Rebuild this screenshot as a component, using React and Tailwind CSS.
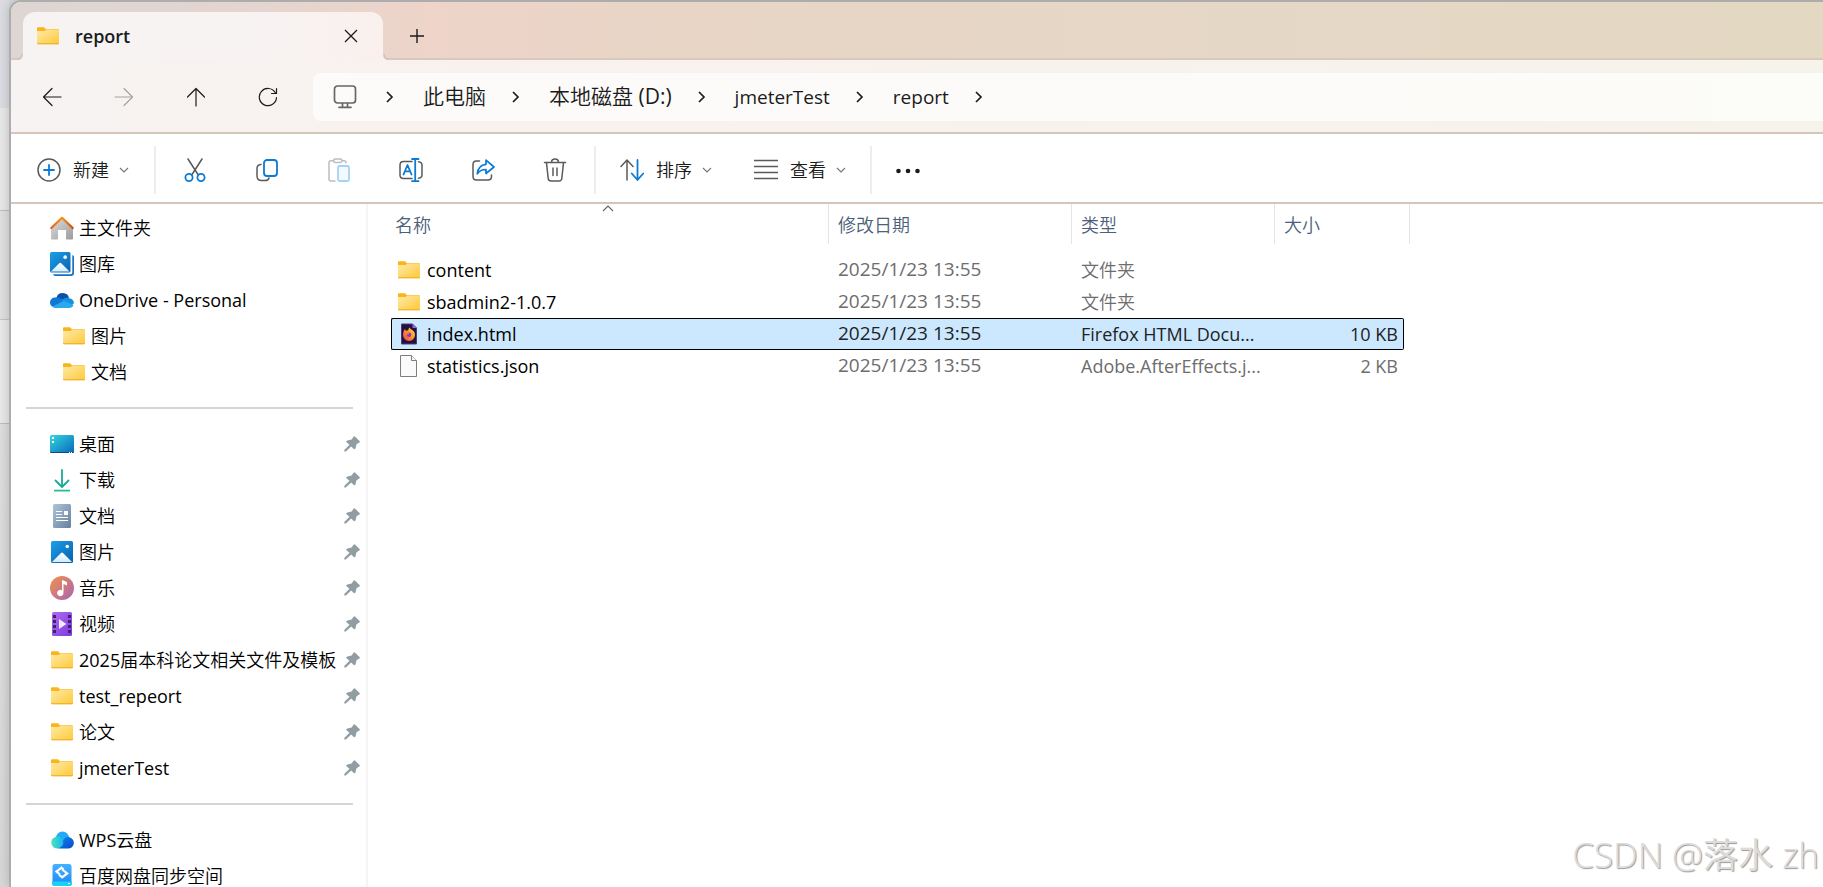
const crumbs = [
  { name: "此电脑", style: "text-[21px]" },
  { name: "本地磁盘 (D:)", style: "text-[21px]" },
  { name: "jmeterTest", style: "text-[19px]" },
  { name: "report", style: "text-[19px]" },
];

const homeItems = [
  { name: "主文件夹", icon: HomeIcon },
  { name: "图库", icon: GalleryIcon },
  { name: "OneDrive - Personal", icon: OneDriveIcon },
  { name: "图片", icon: FolderIcon, nested: true },
  { name: "文档", icon: FolderIcon, nested: true },
];

const pinnedItems = [
  { name: "桌面", icon: DesktopIcon },
  { name: "下载", icon: DownloadIcon },
  { name: "文档", icon: DocumentIcon },
  { name: "图片", icon: PictureIcon },
  { name: "音乐", icon: MusicIcon },
  { name: "视频", icon: VideoIcon },
  { name: "2025届本科论文相关文件及模板", icon: FolderIcon },
  { name: "test_repeort", icon: FolderIcon },
  { name: "论文", icon: FolderIcon },
  { name: "jmeterTest", icon: FolderIcon },
];

const cloudItems = [
  { name: "WPS云盘", icon: WpsIcon },
  { name: "百度网盘同步空间", icon: BaiduIcon },
];

const files = [
  { name: "content", date: "2025/1/23 13:55", type: "文件夹", size: "", icon: FolderIcon },
  { name: "sbadmin2-1.0.7", date: "2025/1/23 13:55", type: "文件夹", size: "", icon: FolderIcon },
  { name: "index.html", date: "2025/1/23 13:55", type: "Firefox HTML Docu...", size: "10 KB", icon: FirefoxFileIcon, selected: true },
  { name: "statistics.json", date: "2025/1/23 13:55", type: "Adobe.AfterEffects.j...", size: "2 KB", icon: FileIcon },
];

/* ---------- sidebar and file icons ---------- */

function FolderIcon() {
  return (
    <svg width="24" height="24" viewBox="0 0 24 24">
      <defs>
        <linearGradient id="folder" x1="0" y1="0" x2="1" y2="1">
          <stop offset="0" stopColor="#ffe9a6" />
          <stop offset="1" stopColor="#ffca3a" />
        </linearGradient>
      </defs>
      <path fill="#f9b51b" d="M1 4.2q0-1 1-1h6l2 2h12q1 0 1 1V19H1z" />
      <path fill="url(#folder)" d="M1 7h7.600l1.600-1.200H23V19.500q0 .7-1 .7H2q-1 0-1-.7z" />
      <path fill="#eeaa1e" d="M1 19.200h22v.3q0 .8-1 .8H2q-1 0-1-.8z" />
    </svg>
  );
}

function HomeIcon() {
  return (
    <svg width="24" height="24" viewBox="0 0 24 24">
      <defs>
        <linearGradient id="house" x1="0" y1="0" x2="1" y2="1">
          <stop offset="0" stopColor="#dedede" />
          <stop offset="1" stopColor="#9c9c9c" />
        </linearGradient>
        <linearGradient id="roof" x1="0" y1="0" x2="1" y2="0">
          <stop offset="0" stopColor="#ea5f1b" />
          <stop offset=".5" stopColor="#f6920e" />
          <stop offset="1" stopColor="#cf4a17" />
        </linearGradient>
      </defs>
      <path fill="url(#house)" d="M1 12 12 2l11 10v10.500q0 1-1 1h-5q-1 0-1-1V14H8v8.500q0 1-1 1H2q-1 0-1-1z" />
      <path fill="none" stroke="url(#roof)" strokeWidth="2.200" strokeLinecap="round" strokeLinejoin="round" d="M1.300 12 12 1.800 22.700 12" />
    </svg>
  );
}

function PhotoArt({ id, size }) {
  return (
    <>
      <defs>
        <linearGradient id={id} x1="0" y1="0" x2="1" y2="1">
          <stop offset="0" stopColor="#1c9fe8" />
          <stop offset="1" stopColor="#0860b0" />
        </linearGradient>
        <linearGradient id={id + "-hill"} x1="0" y1="0" x2="0" y2="1">
          <stop offset="0" stopColor="#ffffff" />
          <stop offset="1" stopColor="#d5ebfb" />
        </linearGradient>
      </defs>
      <rect width={size} height={size} rx="1.500" fill={`url(#${id})`} />
      <path fill={`url(#${id}-hill)`} d={`M1 ${size - 1} ${size / 2 - 1} ${size / 2 + 1}q1-1 2 0L${size - 1} ${size - 1}z`} />
      <circle cx={size * 0.74} cy={size * 0.25} r="1.800" fill="#fff" />
    </>
  );
}

function GalleryIcon() {
  return (
    <svg width="24" height="24" viewBox="0 0 24 24">
      <path fill="#1a6fc0" d="M22.300 3q1.700.5 1.700 2v16q0 3-3 3H5q-1.500 0-2-1.700h17.500q1.800 0 1.800-1.800z" />
      <PhotoArt id="gallery" size={20.5} />
    </svg>
  );
}

function PictureIcon() {
  return (
    <svg width="24" height="24" viewBox="-1 -1 24 24">
      <PhotoArt id="picture" size={22} />
    </svg>
  );
}

function OneDriveIcon() {
  return (
    <svg width="24" height="24" viewBox="0 0 24 24">
      <path fill="#0b4fa8" d="M6.500 9.500A6.500 6.500 0 0 1 19 10l-5 5z" />
      <path fill="#0f78d4" d="M5 19.500a5 5 0 0 1 0-10q3-1 5.500.7l8 5-12 5z" />
      <path fill="#1490df" d="m11 12.300 3.500-2Q18 8.500 20 10.500 23.500 11 24 15l-4 4z" />
      <path fill="#2aa9ee" d="M2.500 18.500 14 12.800l9.500 4.200q-1 3-4.500 3H5q-1.500-.2-2.500-1.500z" />
    </svg>
  );
}

function DesktopIcon() {
  return (
    <svg width="24" height="24" viewBox="0 0 24 24">
      <defs>
        <linearGradient id="desktop" x1="0" y1="0" x2="1" y2="1">
          <stop offset="0" stopColor="#31d9df" />
          <stop offset="1" stopColor="#0a67bb" />
        </linearGradient>
      </defs>
      <rect y="3" width="24" height="18" rx="1.500" fill="url(#desktop)" />
      <path fill="#0b4a80" d="M0 20h24q-.3 1-1.500 1h-21Q.3 21 0 20z" />
      <path fill="#fff" d="M2 5h2v2H2zM2 9h2v2H2zM19 20h1v1h-1zM21 20h1v1h-1z" />
    </svg>
  );
}

function DownloadIcon() {
  return (
    <svg width="24" height="24" viewBox="0 0 24 24" fill="none" stroke="#18ab93" strokeWidth="1.800" strokeLinecap="round" strokeLinejoin="round">
      <path d="M12 2v17M5.500 12.500 12 19l6.500-6.500" />
      <path stroke="#28bf8c" strokeLinecap="butt" d="M4 22.600h16" />
    </svg>
  );
}

function DocumentIcon() {
  return (
    <svg width="24" height="24" viewBox="0 0 24 24">
      <defs>
        <linearGradient id="doc" x1="0" y1="0" x2="1" y2="1">
          <stop offset="0" stopColor="#b0c4d8" />
          <stop offset="1" stopColor="#64809f" />
        </linearGradient>
      </defs>
      <rect x="3" width="18" height="24" rx="1.500" fill="url(#doc)" />
      <path stroke="#fff" strokeWidth="1.200" d="M6 7.500h6M6 10.500h6M6 13.500h12M6 16.500h12" />
      <rect x="14" y="7" width="4" height="4" fill="#fff" />
    </svg>
  );
}

function MusicIcon() {
  return (
    <svg width="24" height="24" viewBox="0 0 24 24">
      <defs>
        <linearGradient id="music" x1="0" y1="0" x2="1" y2="1">
          <stop offset="0" stopColor="#f59048" />
          <stop offset="1" stopColor="#a664b5" />
        </linearGradient>
      </defs>
      <circle cx="12" cy="12" r="12" fill="url(#music)" />
      <path fill="#fff" d="M12 4q3 .8 5 2.200v3.400L13.500 8v9A3.200 3.200 0 1 1 12 14.300z" />
    </svg>
  );
}

function VideoIcon() {
  return (
    <svg width="24" height="24" viewBox="0 0 24 24">
      <defs>
        <linearGradient id="video" x1="0" y1="0" x2="1" y2="1">
          <stop offset="0" stopColor="#b06bf0" />
          <stop offset="1" stopColor="#7c3ae0" />
        </linearGradient>
      </defs>
      <rect x="2" width="20" height="24" rx="1.500" fill="url(#video)" />
      <path fill="#3d2266" d="M3 3h3v3H3zM3 8h3v3H3zM3 13h3v3H3zM3 18h3v3H3zM18 3h3v3h-3zM18 8h3v3h-3zM18 13h3v3h-3zM18 18h3v3h-3z" />
      <path fill="#f3eafd" d="m9 7 7.500 5L9 17z" />
    </svg>
  );
}

function WpsIcon() {
  return (
    <svg width="24" height="24" viewBox="0 0 24 24">
      <defs>
        <linearGradient id="wps-left" x1="0" y1="0" x2="1" y2="0">
          <stop offset="0" stopColor="#4fe3b8" />
          <stop offset="1" stopColor="#17b7f2" />
        </linearGradient>
        <linearGradient id="wps-right" x1="0" y1="0" x2="1" y2="1">
          <stop offset="0" stopColor="#1287f5" />
          <stop offset="1" stopColor="#0648c4" />
        </linearGradient>
      </defs>
      <circle cx="12.500" cy="10" r="6.500" fill="#22aaf5" />
      <path fill="url(#wps-right)" d="M8 20.500 15 10q2-1.700 4.500-.7A5.700 5.700 0 0 1 17.500 20.500z" />
      <path fill="url(#wps-left)" d="M7 20.500A5.900 5.900 0 1 1 12.500 12q2 4-1 6.500-2 2-4.500 2z" />
    </svg>
  );
}

function BaiduIcon() {
  return (
    <svg width="24" height="24" viewBox="0 0 24 24">
      <defs>
        <linearGradient id="baidu" x1="0" y1="0" x2="0" y2="1">
          <stop offset="0" stopColor="#45b2ff" />
          <stop offset="1" stopColor="#1e8bf8" />
        </linearGradient>
      </defs>
      <rect x="2.500" y="0" width="19" height="20" rx="2.500" fill="url(#baidu)" />
      <path fill="#19d0f5" d="M2 17.500h20V20q0 2-2 2H4q-2 0-2-2z" />
      <path fill="#fff" d="M18 19h2v1h-2z" />
      <path fill="none" stroke="#fff" strokeWidth="2.200" d="M9.800 10.300 6.500 7.500l5-3.800 2 1.800M12.200 5.500l5 4-5 3.800-3-2.500" />
    </svg>
  );
}

function FirefoxFileIcon() {
  return (
    <svg width="24" height="24" viewBox="0 0 24 24">
      <defs>
        <linearGradient id="fox" x1="1" y1="0" x2="0" y2="1">
          <stop offset="0" stopColor="#ffe03a" />
          <stop offset=".5" stopColor="#ff9226" />
          <stop offset="1" stopColor="#f5305c" />
        </linearGradient>
      </defs>
      <path fill="#23103f" stroke="#4b3a86" d="M4.500 2h11l4 4v16h-15z" />
      <path fill="#8a6bd8" d="M15.500 1.500 20 6h-4.500z" />
      <path fill="url(#fox)" d="M6 12q0-3 2-5l1 2q1-.8 2.300-.8 0-1.700 1.200-2.700 1 1.600 2.700 2.500 2.800 1.500 2.800 5a6 6 0 0 1-12 0z" />
      <circle cx="12" cy="12.800" r="2.300" fill="#7b3bd1" />
      <path fill="#ff7a2c" d="M8.500 11q2-1 3.700.5-.2 1-1.700 1.200z" />
    </svg>
  );
}

function FileIcon() {
  return (
    <svg width="24" height="24" viewBox="0 0 24 24" fill="#fafafa" stroke="#7d7d7d">
      <path d="M3.500 1.500h11l5 5v16h-16z" />
      <path d="M14.500 1.500v5h5" />
    </svg>
  );
}

function PinIcon() {
  return (
    <svg className="shrink-0" width="16" height="16" viewBox="0 0 16 16">
      <path fill="#929ca3" d="M9.500.8q.8-.9 1.700 0l4.300 4.200q.8.900-.2 1.500L12.500 8.300l-1 3.900q-.4 1.400-1.500 1.100L7.200 10.600 1.800 15.500H.3v-1.400L5.500 8.800 2.300 5.900q-.3-1.200 1.100-1.500l4.200-.9z" />
    </svg>
  );
}

/* ---------- toolbar icons ---------- */

function Chevron({ className = "" }) {
  return (
    <svg className={className} width="10" height="14" viewBox="0 0 10 14" fill="none" stroke="#1b1b1b" strokeWidth="1.700">
      <path d="m2 2 5 5-5 5" />
    </svg>
  );
}

function SmallChevron() {
  return (
    <svg width="10" height="10" viewBox="0 0 10 10" fill="none" stroke="#777" strokeWidth="1.100">
      <path d="m1 3 4 4 4-4" />
    </svg>
  );
}

function Stroke({ children }) {
  return (
    <svg width="24" height="24" viewBox="0 0 24 24" fill="none" stroke="#5a5a5a" strokeWidth="1.500" strokeLinecap="round" strokeLinejoin="round">
      {children}
    </svg>
  );
}

const commands = [
  {
    label: "剪切",
    art: (
      <>
        <path d="M5 1 15.300 17M19 1 8.700 17" />
        <g stroke="#0a7bd6" strokeWidth="1.800">
          <circle cx="6" cy="19.500" r="3.600" />
          <circle cx="18" cy="19.500" r="3.600" />
        </g>
      </>
    ),
  },
  {
    label: "复制",
    art: (
      <>
        <path d="M6 6.500q-4 .2-4 4V18q0 4.500 4.500 4.500H10q3.500 0 4-2.500" />
        <rect x="9" y="2" width="13" height="16" rx="3" stroke="#0a7bd6" strokeWidth="1.800" />
      </>
    ),
  },
  {
    label: "粘贴",
    art: (
      <>
        <g stroke="#bdbdbd">
          <path d="M6.500 2.800H4q-2 0-2 2V21q0 2 2 2h4M15 2.800h2q2 0 2 2" />
          <rect x="6.500" y="1" width="8.500" height="3.500" rx="1.700" />
        </g>
        <rect x="11" y="8" width="11" height="15" rx="1.500" fill="#f3f9fe" stroke="#a5d3f5" strokeWidth="1.800" />
      </>
    ),
  },
  {
    label: "重命名",
    art: (
      <>
        <path d="M13 3.500H4.500Q1 3.500 1 7v10q0 3.500 3.500 3.500H13M19.500 3.700q3.500.3 3.500 3.500v9.600q0 3.200-3.500 3.500" />
        <g stroke="#0a7bd6" strokeWidth="1.800">
          <path d="M13 1h6.500M13 23.200h6.500M16.200 1v22.200" />
          <path d="m4.500 16.500 4-9.500 4 9.500M6 13.300h5" />
        </g>
      </>
    ),
  },
  {
    label: "共享",
    art: (
      <>
        <path d="M8.500 3H5.500Q2 3 2 6.500v12Q2 22 5.500 22h11.500q3.500 0 3.500-3.500V17" />
        <path stroke="#0a7bd6" strokeWidth="1.700" d="M15 2.200 23 9l-8 6.500v-4q-6 0-8.700 4.300Q7.200 7 15 6.300z" />
      </>
    ),
  },
  {
    label: "删除",
    art: (
      <>
        <path d="M1.500 4.500h21M8.500 4.300q0-3.300 3.500-3.300t3.500 3.300M3.500 4.800 5.200 20.500q.3 2.500 2.800 2.500h8q2.500 0 2.800-2.500L20.500 4.800M10 10v7.500M14 10v7.500" />
      </>
    ),
  },
];

function TabCorner({ className }) {
  return (
    <svg className={className} width="6" height="6" viewBox="0 0 6 6">
      <path fill="#f7f2f1" d="M6 0v6H0q6 0 6-6z" />
      <path fill="none" stroke="#d3c2bc" strokeWidth="1.500" d="M0 5q5 0 5-5" />
    </svg>
  );
}

function TitleBar() {
  return (
    <div className="flex h-[58px] items-end border-b-2 border-[#d9c9bd] bg-[linear-gradient(90deg,#ded6d3_0%,#e3d5d0_13%,#eed4c9_23%,#e8d5c6_36%,#e5d8c6_75%,#e3d8c2_100%)] pl-3">
      <div className="relative -mb-0.5 flex h-12 w-[360px] items-center rounded-t-xl bg-linear-to-r from-[#f6f3f2] from-60% to-[#faf0ee] pr-6 pl-[13px]">
        <TabCorner className="absolute bottom-0 -left-[6px]" />
        <TabCorner className="absolute -right-[6px] bottom-0 -scale-x-100" />
        <FolderIcon />
        <span className="ml-[15px] flex-1 text-lg font-semibold text-[#1b1b1b]">report</span>
        <button type="button" aria-label="关闭标签页">
          <svg width="16" height="16" viewBox="0 0 16 16" stroke="#1b1b1b" strokeWidth="1.300">
            <path d="m2 2 12 12M14 2 2 14" />
          </svg>
        </button>
      </div>
      <button type="button" aria-label="新建标签页" className="mb-3 ml-6">
        <svg width="20" height="20" viewBox="0 0 20 20" stroke="#1b1b1b" strokeWidth="1.400">
          <path d="M10 3v14M3 10h14" />
        </svg>
      </button>
    </div>
  );
}

function NavButton({ label, muted, children }) {
  return (
    <button type="button" aria-label={label} className="flex w-[72px] justify-center">
      <svg width="20" height="20" viewBox="0 0 20 20" fill="none" stroke={muted ? "#a5a2a1" : "#1b1b1b"} strokeWidth="1.200" strokeLinecap="round" strokeLinejoin="round">
        {children}
      </svg>
    </button>
  );
}

function AddressBar() {
  return (
    <div className="flex h-[74px] items-center border-b-2 border-[#d6c6b9] bg-linear-to-r from-[#f6f3f2] via-[#f9f1ee] via-25% to-[#f6f3eb] pt-0.5 pl-[5px]">
      <NavButton label="后退">
        <path d="M19 10H1.500M10 1.500 1.500 10l8.500 8.500" />
      </NavButton>
      <NavButton label="前进" muted>
        <path d="M1 10h17.500M10 1.500l8.500 8.500-8.500 8.500" />
      </NavButton>
      <NavButton label="上移">
        <path d="M10 19V1.500M1.500 10 10 1.500l8.500 8.500" />
      </NavButton>
      <NavButton label="刷新">
        <path d="M18.500 10.500A8.600 8.600 0 1 1 17.200 5.500M18.500 1.500v5h-5" />
      </NavButton>
      <nav className="ml-[9px] flex h-12 flex-1 items-center rounded-l-lg bg-white/70 pl-5 text-[#1b1b1b]">
        <svg width="24" height="24" viewBox="0 0 24 24" fill="none" stroke="#666" strokeWidth="1.700" strokeLinecap="round">
          <rect x="1.500" y="1" width="21" height="17" rx="3" />
          <path d="M9.500 18.500v3M14.500 18.500v3M6 22.300h12" />
        </svg>
        <Chevron className="ml-7" />
        {crumbs.map((crumb) => (
          <div key={crumb.name} className="flex items-center">
            <a href="#" className={`ml-7 whitespace-nowrap ${crumb.style}`}>{crumb.name}</a>
            <Chevron className="ml-[25px]" />
          </div>
        ))}
      </nav>
    </div>
  );
}

function Toolbar() {
  return (
    <div className="flex h-[70px] items-center border-b-2 border-[#d6c6b9] bg-white pt-1 text-lg text-[#1b1b1b]">
      <button type="button" className="ml-[26px] flex items-center">
        <Stroke>
          <circle cx="12" cy="12" r="11" />
          <path stroke="#0a7bd6" strokeWidth="1.800" d="M12 7v10M7 12h10" />
        </Stroke>
        <span className="mr-2.5 ml-3">新建</span>
        <SmallChevron />
      </button>
      <div className="ml-[25px] h-12 w-0.5 bg-[#ededed]" />
      <div className="ml-[3px] flex">
        {commands.map((c) => (
          <button key={c.label} type="button" aria-label={c.label} className="flex w-[72px] justify-center">
            <Stroke>{c.art}</Stroke>
          </button>
        ))}
      </div>
      <div className="ml-[3px] h-12 w-0.5 bg-[#ededed]" />
      <button type="button" className="ml-6 flex items-center">
        <Stroke>
          <path d="M7 22V2.500M1 8.500l6-6.500 6 6.500" />
          <path stroke="#0a7bd6" strokeWidth="1.800" d="M17.500 2v19.500M11.800 15.500l5.700 6.500 5.700-6.500" />
        </Stroke>
        <span className="mr-2.5 ml-3">排序</span>
        <SmallChevron />
      </button>
      <button type="button" className="ml-[42px] flex items-center">
        <svg width="24" height="24" viewBox="0 0 24 24" stroke="#5a5a5a" strokeWidth="1.500">
          <path d="M0 2.500h24M0 8.500h24M0 14.500h24M0 20.500h24" />
        </svg>
        <span className="mr-2.5 ml-3">查看</span>
        <SmallChevron />
      </button>
      <div className="ml-6 h-12 w-0.5 bg-[#ededed]" />
      <button type="button" aria-label="查看更多" className="ml-6">
        <svg width="24" height="24" viewBox="0 0 24 24" fill="#1b1b1b">
          <circle cx="2.500" cy="13" r="2.300" />
          <circle cx="12" cy="13" r="2.300" />
          <circle cx="21.500" cy="13" r="2.300" />
        </svg>
      </button>
    </div>
  );
}

function SidebarItem({ item, pinned }) {
  const Icon = item.icon;
  return (
    <li>
      <a href="#" className={item.nested ? "flex h-9 items-center pr-2 pl-[51px]" : "flex h-9 items-center pr-1.5 pl-[39px]"}>
        <Icon />
        <span className="ml-[5px] flex-1 leading-5 whitespace-nowrap">{item.name}</span>
        {pinned && <PinIcon />}
      </a>
    </li>
  );
}

function Divider() {
  return (
    <li className="flex h-9 items-center pr-[13px] pl-[15px]">
      <hr className="h-0.5 w-full border-0 bg-[#d5d5d5]" />
    </li>
  );
}

function Sidebar() {
  return (
    <ul className="w-[357px] shrink-0 overflow-hidden border-r-2 border-[#f5f5f5] pt-1.5 text-lg text-black">
      {homeItems.map((item) => (
        <SidebarItem key={item.name} item={item} />
      ))}
      <Divider />
      {pinnedItems.map((item) => (
        <SidebarItem key={item.name} item={item} pinned />
      ))}
      <Divider />
      {cloudItems.map((item) => (
        <SidebarItem key={item.name} item={item} />
      ))}
    </ul>
  );
}

function FileRow({ file }) {
  const Icon = file.icon;
  const cell = file.selected
    ? "h-8 border-y border-black bg-[#cce8ff] p-0 text-[#222]"
    : "h-8 p-0 text-[#6d6d6d]";
  return (
    <tr>
      <td className={file.selected ? `${cell} rounded-l-xs border-l` : cell}>
        <div className={file.selected ? "flex items-center pl-[5px] text-black" : "flex items-center pl-1.5 text-black"}>
          <Icon />
          <span className="ml-1.5">{file.name}</span>
        </div>
      </td>
      <td className={cell}>
        <span className="pl-[9px] text-[19px]">{file.date}</span>
      </td>
      <td className={cell}>
        <span className="pl-[9px] whitespace-nowrap">{file.type}</span>
      </td>
      <td className={file.selected ? `${cell} rounded-r-xs border-r text-right` : `${cell} text-right`}>
        <span className={file.selected ? "pr-[5px]" : "pr-1.5"}>{file.size}</span>
      </td>
      <td className="p-0" />
    </tr>
  );
}

function FileList() {
  return (
    <main className="flex-1 pl-[23px] text-lg">
      <table className="table-fixed border-separate border-spacing-0">
        <colgroup>
          <col className="w-[438px]" />
          <col className="w-[243px]" />
          <col className="w-[203px]" />
          <col className="w-[129px]" />
          <col className="w-[6px]" />
        </colgroup>
        <thead className="text-left text-[#4c607a]">
          <tr>
            <th className="relative h-10 border-r border-[#e5e5e5] p-0 pt-0.5 pl-1 font-normal">
              名称
              <svg className="absolute top-0 left-1/2 -ml-2" width="12" height="8" viewBox="0 0 12 8" fill="none" stroke="#666" strokeWidth="1.200">
                <path d="m1 7 5-5 5 5" />
              </svg>
            </th>
            <th className="border-r border-[#e5e5e5] p-0 pt-0.5 pl-[9px] font-normal">修改日期</th>
            <th className="border-r border-[#e5e5e5] p-0 pt-0.5 pl-[9px] font-normal">类型</th>
            <th colSpan={2} className="border-r border-[#e5e5e5] p-0 pt-0.5 pl-[9px] font-normal">大小</th>
          </tr>
        </thead>
        <tbody>
          <tr aria-hidden="true">
            <td colSpan={5} className="h-2.5 p-0" />
          </tr>
          {files.map((file) => (
            <FileRow key={file.name} file={file} />
          ))}
        </tbody>
      </table>
    </main>
  );
}

export default function App() {
  return (
    <div className="relative flex h-screen overflow-hidden bg-[#d9d9dd] font-['Open_Sans','Noto_Sans_CJK_SC_DemiLight','Noto_Sans_CJK_SC',sans-serif]">
      {/* edge of the window behind */}
      <div className="flex w-[9px] shrink-0 flex-col">
        <div className="h-[108px] bg-[#dcdde3]" />
        <div className="h-[103px] border-b border-[#bdbdbd] bg-[#e8e8e8]" />
        <div className="h-[109px] border-b border-[#c4c4c4] bg-[#e0e0e0]" />
        <div className="h-[104px] border-b border-[#bdbdbd] bg-[#e9e9e9]" />
        <div className="flex-1 bg-linear-to-b from-[#dedede] to-[#d8d8d8]" />
      </div>
      <div className="flex min-w-0 flex-1 flex-col overflow-hidden rounded-tl-xl border-t-2 border-l-2 border-[#adadad] bg-white shadow-[0_0_12px_rgba(0,0,0,0.2)]">
        <TitleBar />
        <AddressBar />
        <Toolbar />
        <div className="flex min-h-0 flex-1">
          <Sidebar />
          <FileList />
        </div>
      </div>
      <div className="absolute right-1 bottom-1.5 text-[35px] font-light text-[#dcdcdc] [text-shadow:1px_1px_1px_#999]">
        CSDN @落水 zh
      </div>
    </div>
  );
}
